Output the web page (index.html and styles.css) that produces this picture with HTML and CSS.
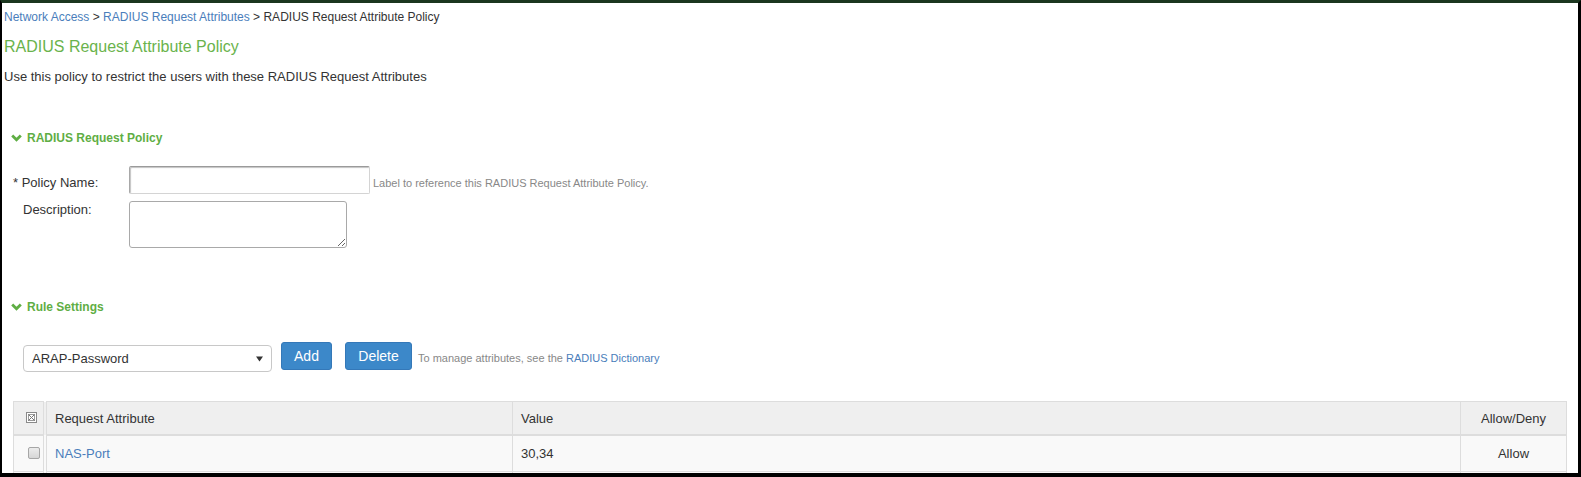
FILE: index.html
```html
<!DOCTYPE html>
<html>
<head>
  <title>RADIUS Request Attribute Policy</title>
  <link rel="stylesheet" href="styles.css">
</head>
<body>
  <div class="frame">
    <div class="crumbs">
      <a href="#">Network Access</a> &gt; <a href="#">RADIUS Request Attributes</a> &gt; RADIUS Request Attribute Policy
    </div>
    <h1 class="title">RADIUS Request Attribute Policy</h1>
    <p class="intro">Use this policy to restrict the users with these RADIUS Request Attributes</p>

    <div class="section-head policy-head">
      <svg class="chevron" width="11" height="8" viewBox="0 0 11 8"><path d="M1.2 1.4 L5.5 5.7 L9.8 1.4" fill="none" stroke="#5fae44" stroke-width="2.8"/></svg>
      RADIUS Request Policy
    </div>

    <div class="form">
      <div class="form-row row-name">
        <label class="label"><span class="req">* </span>Policy Name:</label>
        <input class="text-input" type="text">
        <span class="hint hint-name">Label to reference this RADIUS Request Attribute Policy.</span>
      </div>
      <div class="form-row row-desc">
        <label class="label label-desc">Description:</label>
        <textarea class="text-area"></textarea>
      </div>
    </div>

    <div class="section-head rules-head">
      <svg class="chevron" width="11" height="8" viewBox="0 0 11 8"><path d="M1.2 1.4 L5.5 5.7 L9.8 1.4" fill="none" stroke="#5fae44" stroke-width="2.8"/></svg>
      Rule Settings
    </div>

    <div class="rule-bar">
      <div class="select-wrap">
        <select class="attr-select">
          <option>ARAP-Password</option>
        </select>
        <svg class="caret" width="7" height="6" viewBox="0 0 7 6"><path d="M0 0.5 H7 L3.5 5.5 Z" fill="#333"/></svg>
      </div>
      <button class="btn btn-add">Add</button>
      <button class="btn btn-delete">Delete</button>
      <span class="hint hint-rule">To manage attributes, see the <a href="#">RADIUS Dictionary</a></span>
    </div>

    <table class="attr-table">
      <thead>
        <tr>
          <th class="col-check">
            <svg width="11" height="11" viewBox="0 0 11 11">
              <rect x="0.5" y="0.5" width="10" height="10" fill="#fff" stroke="#8a8a8a"/>
              <rect x="2.5" y="2.5" width="6" height="6" fill="none" stroke="#9a9a9a"/>
              <path d="M2.5 2.5 L8.5 8.5 M8.5 2.5 L2.5 8.5" stroke="#777" stroke-width="1"/>
            </svg>
          </th>
          <th class="col-attr">Request Attribute</th>
          <th class="col-value">Value</th>
          <th class="col-allow">Allow/Deny</th>
        </tr>
      </thead>
      <tbody>
        <tr>
          <td class="col-check"><input class="row-check" type="checkbox"></td>
          <td class="col-attr"><a href="#">NAS-Port</a></td>
          <td class="col-value">30,34</td>
          <td class="col-allow">Allow</td>
        </tr>
        <tr>
          <td class="col-check"></td>
          <td class="col-attr"></td>
          <td class="col-value"></td>
          <td class="col-allow"></td>
        </tr>
      </tbody>
    </table>
  </div>
</body>
</html>
```

FILE: styles.css
```css
html, body {
  margin: 0;
  padding: 0;
  background: #000;
}
body {
  font-family: "Liberation Sans", Arial, sans-serif;
  color: #333;
  font-size: 12px;
}
a { color: #4a7ebb; text-decoration: none; }

.frame {
  box-sizing: border-box;
  width: 1581px;
  height: 477px;
  overflow: hidden;
  background: #fff;
  border-top: 3px solid #1b361f;
  border-left: 2px solid #000;
  border-right: 3px solid #000;
  border-bottom: 4px solid #000;
}

.crumbs {
  margin-top: 5px;
  padding-left: 2px;
  line-height: 18px;
  font-size: 12px;
}
.title {
  margin: 10px 0 0;
  padding-left: 2px;
  font-size: 16px;
  font-weight: normal;
  line-height: 22px;
  color: #6ab34c;
}
.intro {
  margin: 10px 0 0;
  padding-left: 2px;
  line-height: 18px;
  font-size: 13px;
}

.section-head {
  display: flex;
  align-items: center;
  padding-left: 9px;
  line-height: 18px;
  font-size: 12px;
  font-weight: bold;
  color: #5fae44;
}
.section-head .chevron { margin-right: 5px; }
.policy-head { margin-top: 43px; }
.rules-head { margin-top: 50px; }

/* policy form */
.form {
  margin-top: 19px;
  padding-left: 11px;
}
.form-row {
  display: flex;
  align-items: flex-start;
}
.row-desc { margin-top: 7px; }
.label {
  width: 116px;
  flex: none;
  font-size: 13px;
  line-height: 18px;
}
.row-name .label { margin-top: 8px; }
.label-desc { padding-left: 10px; box-sizing: border-box; }
.text-input {
  box-sizing: border-box;
  width: 241px;
  height: 28px;
  margin: 0;
  border: 1px solid #d4d4d4;
  border-top-color: #9a9a9a;
  border-left-color: #a8a8a8;
  box-shadow: inset 1px 1px 1px #c4c4c4;
  border-radius: 2px;
  background: #fff;
}
.text-area {
  box-sizing: border-box;
  width: 218px;
  height: 47px;
  margin: 0;
  border: 1px solid #a9a9a9;
  border-radius: 3px;
  background: #fff;
}
.hint {
  font-size: 11px;
  line-height: 14px;
  color: #888;
}
.hint-name { margin: 10px 0 0 3px; }

/* rule settings */
.rule-bar {
  display: flex;
  align-items: flex-start;
  margin-top: 26px;
  padding-left: 21px;
}
.select-wrap {
  position: relative;
  margin-top: 3px;
}
.attr-select {
  box-sizing: border-box;
  width: 249px;
  height: 27px;
  margin: 0;
  padding: 0 20px 0 8px;
  border: 1px solid #c8c8c8;
  border-radius: 4px;
  background: #fff;
  font-family: inherit;
  font-size: 13px;
  color: #333;
  appearance: none;
  -webkit-appearance: none;
}
.caret {
  position: absolute;
  right: 9px;
  top: 11px;
}
.btn {
  box-sizing: border-box;
  height: 28px;
  margin: 0;
  padding: 0 12px;
  border: 1px solid #3478b8;
  border-radius: 3px;
  background: #3c88c9;
  color: #fff;
  font-family: inherit;
  font-size: 14px;
  cursor: pointer;
}
.btn-add { margin-left: 9px; width: 51px; }
.btn-delete { margin-left: 13px; width: 67px; }
.hint-rule { margin: 9px 0 0 6px; }

/* attribute table */
.attr-table {
  margin: 29px 0 0 11px;
  width: 1554px;
  border-collapse: collapse;
  table-layout: fixed;
  font-size: 13px;
}
.attr-table th,
.attr-table td {
  padding: 0 8px;
  border: 1px solid #ddd;
  text-align: left;
  vertical-align: middle;
}
.attr-table th {
  height: 32px;
  background: #efefef;
  font-weight: normal;
  border-bottom: 2px solid #ddd;
}
.attr-table td {
  height: 35px;
  background: #f9f9f9;
}
.attr-table .col-check {
  width: 17px;
  padding: 0 0 0 12px;
  border-right: 4px double #ddd;
}
.attr-table th.col-check svg { display: block; margin-top: -2px; }
.attr-table .col-attr { width: 449px; }
.attr-table .col-value { width: 931px; }
.attr-table .col-allow { text-align: center; }
.row-check {
  display: block;
  box-sizing: border-box;
  width: 12px;
  height: 12px;
  margin: -2px 0 0 2px;
  border: 1px solid #a6a6a6;
  border-radius: 2px;
  background: linear-gradient(#ececec, #d6d6d6);
  appearance: none;
  -webkit-appearance: none;
}
```
